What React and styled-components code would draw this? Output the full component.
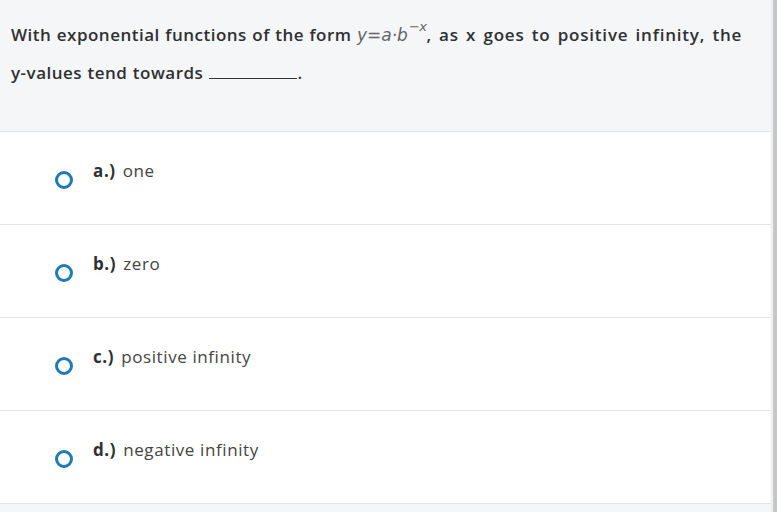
import React from 'react'
import styled, { createGlobalStyle } from 'styled-components'

const GlobalStyle = createGlobalStyle`
  html, body {
    margin: 0;
    padding: 0;
    background: #f5f6f8;
  }
  body {
    font-family: "Open Sans", Lato, sans-serif;
    color: #333;
    font-variant-ligatures: none;
  }
`

const Page = styled.div`
  display: flex;
  width: 777px;
  height: 512px;
  overflow: hidden;
`

const Panel = styled.div`
  flex: 1;
  background: #f5f6f8;
  border-right: 1px solid #e6e7ea;
`

const Scrollbar = styled.div`
  width: 4px;
  margin-left: 1px;
  background: #c6c6c6;
`

const Question = styled.div`
  padding: 16px 11px 0 11px;
  box-sizing: border-box;
  height: 131px;
  font-size: 17px;
  font-weight: 600;
  line-height: 37px;
  color: #2f3033;
  letter-spacing: 0.5px;
  word-spacing: 0.5px;
`

const Wide = styled.span`
  letter-spacing: ${(props) => props.spacing || '0.5px'};
  word-spacing: 2px;
`

const NoWrap = styled.span`
  white-space: nowrap;
`

const Math = styled.span`
  font-family: "DejaVu Sans", sans-serif;
  font-style: italic;
  font-weight: 400;
  color: #666;
  font-size: 17px;
  letter-spacing: 0;
`

const Sup = styled.sup`
  font-size: 13px;
  position: relative;
  top: -3px;
  line-height: 0;
  margin-left: 1px;
  letter-spacing: -0.5px;
`

const Blank = styled.span`
  display: inline-block;
  width: 88px;
  border-bottom: 1px solid #333;
  height: 18px;
  margin-left: 6px;
`

const Options = styled.div`
  background: #fff;
  border-top: 1px solid #e2e3e5;
`

const Row = styled.label`
  display: flex;
  align-items: flex-start;
  border-bottom: 1px solid #e2e3e5;
  padding-left: 55px;
  box-sizing: border-box;
  height: 93px;
`

const Radio = styled.span`
  width: 12px;
  height: 12px;
  border: 3px solid #1f7ab8;
  border-radius: 50%;
  margin-top: 39px;
  flex-shrink: 0;
`

const Label = styled.div`
  margin-left: 20px;
  margin-top: 27px;
  font-size: 17px;
  letter-spacing: 0.6px;
  color: #444;
  font-weight: 400;
`

const Letter = styled.b`
  font-weight: 700;
  color: #2f3033;
  margin-right: 7px;
`

const options = [
  { id: 'a', text: 'one' },
  { id: 'b', text: 'zero' },
  { id: 'c', text: 'positive infinity' },
  { id: 'd', text: 'negative infinity' },
]

export default function App() {
  return (
    <>
      <GlobalStyle />
      <Page>
        <Panel>
          <Question>
            With exponential functions of the form{' '}
            <Math>
              y=a·b<Sup>−x</Sup>
            </Math>
            <Wide spacing="0.8px">, as x goes to positive infinity, the</Wide>{' '}
            <NoWrap>y-values</NoWrap> tend towards
            <Blank />.
          </Question>
          <Options>
            {options.map((o) => (
              <Row key={o.id}>
                <Radio />
                <Label>
                  <Letter>{o.id}.)</Letter>
                  {o.text}
                </Label>
              </Row>
            ))}
          </Options>
        </Panel>
        <Scrollbar />
      </Page>
    </>
  )
}
